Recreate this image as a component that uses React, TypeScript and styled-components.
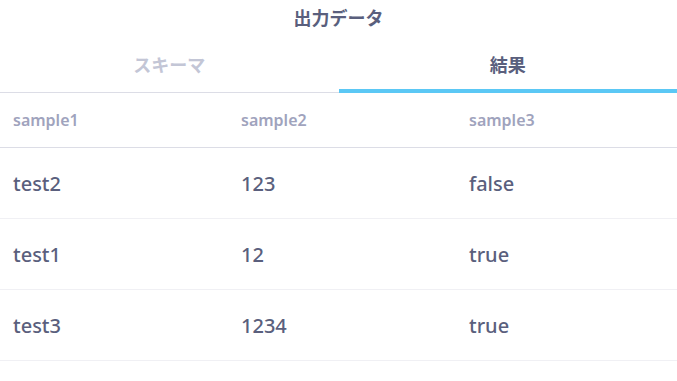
import styled, { createGlobalStyle } from "styled-components"

const GlobalStyle = createGlobalStyle`
  html, body {
    margin: 0;
    padding: 0;
    background: #ffffff;
  }
  body {
    font-family: "Open Sans", "Noto Sans CJK JP", sans-serif;
  }
`

const Page = styled.div`
  width: 677px;
  display: flex;
  flex-direction: column;
`

const Title = styled.div`
  height: 33px;
  display: flex;
  align-items: center;
  justify-content: center;
  font-size: 18px;
  font-weight: 700;
  color: #5a5f7d;
`

const Tabs = styled.div`
  display: flex;
  border-bottom: 1px solid #dcdde6;
`

const Tab = styled.div<{ active?: boolean }>`
  flex: 1;
  height: 60px;
  box-sizing: border-box;
  display: flex;
  align-items: center;
  justify-content: center;
  padding-top: 5px;
  font-size: 18px;
  font-weight: 700;
  color: ${(p) => (p.active ? "#5a5f7d" : "#c3c6d6")};
  border-bottom: 4px solid ${(p) => (p.active ? "#5bc8f5" : "transparent")};
  margin-bottom: -1px;
`

const Row = styled.div<{ head?: boolean }>`
  display: grid;
  grid-template-columns: 228px 228px 1fr;
  align-items: center;
  box-sizing: border-box;
  height: ${(p) => (p.head ? 55 : 71)}px;
  border-bottom: 1px solid ${(p) => (p.head ? "#dcdde6" : "#f0f0f4")};
`

const Cell = styled.div<{ head?: boolean }>`
  padding-left: 13px;
  font-family: "Noto Sans", "Open Sans", sans-serif;
  font-size: ${(p) => (p.head ? 16 : 20)}px;
  font-weight: ${(p) => (p.head ? 600 : 500)};
  color: ${(p) => (p.head ? "#a0a3bd" : "#5a5f7d")};
`

const columns = ["sample1", "sample2", "sample3"]

const rows = [
  ["test2", "123", "false"],
  ["test1", "12", "true"],
  ["test3", "1234", "true"],
]

const App = () => {
  return (
    <Page>
      <GlobalStyle />
      <Title>出力データ</Title>
      <Tabs>
        <Tab>スキーマ</Tab>
        <Tab active>結果</Tab>
      </Tabs>
      <Row head>
        {columns.map((c) => (
          <Cell head key={c}>
            {c}
          </Cell>
        ))}
      </Row>
      {rows.map((r, i) => (
        <Row key={i}>
          {r.map((v, j) => (
            <Cell key={j}>{v}</Cell>
          ))}
        </Row>
      ))}
    </Page>
  )
}

export default App
